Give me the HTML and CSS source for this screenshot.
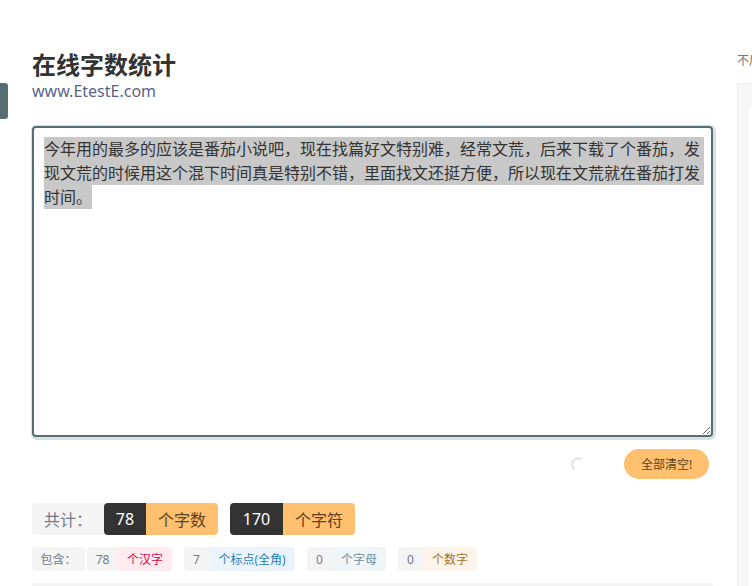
FILE: index.html
```html
<!DOCTYPE html>
<html lang="zh-CN">
<head>
<meta charset="utf-8">
<title>在线字数统计</title>
<link rel="stylesheet" href="styles.css">
</head>
<body>
<div class="side-tab"></div>
<div class="page">
  <main class="main">
    <h1 class="title">在线字数统计</h1>
    <div class="subtitle">www.EtestE.com</div>
    <div class="editor">
      <span class="line">今年用的最多的应该是番茄小说吧，现在找篇好文特别难，经常文荒，后来下载了个番茄，发</span>
      <span class="line">现文荒的时候用这个混下时间真是特别不错，里面找文还挺方便，所以现在文荒就在番茄打发</span>
      <span class="line last">时间。</span>
    </div>
    <div class="actions">
      <svg class="spinner" width="14" height="14" viewBox="0 0 14 14"><path d="M11 2.2A5.6 5.6 0 0 0 5 12.4" fill="none" stroke="#e2e4e6" stroke-width="2.4"/></svg>
      <button class="clear">全部清空!</button>
    </div>
    <div class="totals">
      <span class="cell label-big">共计：</span>
      <div class="group">
        <span class="cell num-dark">78</span><span class="cell unit-orange">个字数</span>
      </div>
      <div class="group">
        <span class="cell num-dark wide">170</span><span class="cell unit-orange">个字符</span>
      </div>
    </div>
    <div class="details">
      <span class="chip chip-label">包含：</span>
      <div class="group-small first">
        <span class="chip chip-num">78</span><span class="chip red">个汉字</span>
      </div>
      <div class="group-small">
        <span class="chip chip-num">7</span><span class="chip blue">个标点(全角)</span>
      </div>
      <div class="group-small">
        <span class="chip chip-num">0</span><span class="chip slate">个字母</span>
      </div>
      <div class="group-small">
        <span class="chip chip-num">0</span><span class="chip amber">个数字</span>
      </div>
    </div>
    <div class="result-panel"></div>
  </main>
  <aside class="aside">
    <div class="aside-note">不后悔的选择</div>
    <div class="aside-panel"><div class="aside-inner"></div></div>
  </aside>
</div>
</body>
</html>
```

FILE: styles.css
```css
* { box-sizing: border-box; }
html, body { margin: 0; height: 100%; overflow: hidden; background: #fff; }
body {
  font-family: "Noto Sans", "Noto Sans CJK SC", sans-serif;
  color: #333;
  position: relative;
}
.side-tab {
  position: absolute;
  left: 0;
  top: 83px;
  width: 8px;
  height: 36px;
  background: #546e74;
  border-radius: 0 3px 3px 0;
}
.page { display: flex; width: 752px; height: 586px; padding-left: 32px; overflow: hidden; }
.main { width: 681px; flex: none; padding-top: 48px; }
.title { margin: 0; font-size: 24px; line-height: 34px; font-weight: 700; color: #333; }
.subtitle { font-size: 16px; line-height: 18px; color: #5a6488; }
.editor {
  margin-top: 26px;
  height: 311px;
  padding: 9px 9px 9px 10px;
  border: 2px solid #546e74;
  border-radius: 4px;
  box-shadow: 0 0 0 1px #d9e0e2, 1px 1px 0 2px #d9e0e2;
  font-size: 16px;
  line-height: 24px;
  color: #333;
  overflow: hidden;
  resize: both;
  background: #fff;
}
.line { display: block; width: fit-content; padding-right: 4px; background: #c8c8c8; white-space: nowrap; }
.line.last { padding-right: 0; }
.actions {
  display: flex;
  justify-content: flex-end;
  align-items: center;
  height: 30px;
  margin-top: 12px;
  padding-right: 4px;
}
.spinner { margin-right: 40px; }
.clear {
  width: 85px;
  height: 30px;
  border: 0;
  padding: 0;
  border-radius: 15px;
  background: #ffc06f;
  color: #5c4321;
  font: inherit;
  font-size: 12px;
}
.totals { display: flex; margin-top: 24px; height: 32px; }
.cell { display: flex; align-items: center; justify-content: center; height: 32px; font-size: 16px; }
.label-big { width: 72px; background: #f4f4f5; color: #73798c; border-radius: 4px 0 0 4px; }
.group { display: flex; margin-right: 12px; }
.num-dark { background: #333; color: #fff; border-radius: 4px 0 0 4px; width: 42px; }
.num-dark.wide { width: 53px; }
.unit-orange { width: 72px; background: #ffc06f; color: #5c4321; border-radius: 0 4px 4px 0; }
.details { display: flex; margin-top: 12px; height: 24px; }
.chip { display: flex; align-items: center; justify-content: center; height: 24px; font-size: 12px; }
.chip-label { width: 53px; background: #f4f4f5; color: #73798c; border-radius: 4px; }
.group-small { display: flex; margin-right: 12px; }
.group-small.first { margin-left: 2px; }
.chip-num { min-width: 25px; background: #f4f4f5; color: #73798c; border-radius: 4px 0 0 4px; }
.first .chip-num { width: 31px; }
.red, .blue, .slate, .amber { border-radius: 0 4px 4px 0; }
.red { width: 54px; background: #ffebf0; color: #d40b45; }
.blue { width: 86px; background: #ebf4fb; color: #2a7fb8; }
.slate { width: 54px; background: #eff4f6; color: #6f8f9c; }
.amber { width: 54px; background: #fdf5eb; color: #a9701b; }
.result-panel { height: 3px; margin-top: 12px; background: #f4f4f5; border-radius: 4px 4px 0 0; }
.aside { flex: 1; min-width: 0; margin-left: 24px; overflow: hidden; }
.aside-note { margin-top: 52px; font-size: 12px; line-height: 17px; color: #777; white-space: nowrap; overflow: hidden; }
.aside-panel {
  margin-top: 14px;
  height: 503px;
  padding: 22px 0 0 11px;
  background: #f7f7f7;
  border: 1px solid #eee;
  border-right: 0;
  border-bottom: 0;
}
.aside-inner { height: 100%; background: #fff; border-radius: 4px 0 0 0; }
```
